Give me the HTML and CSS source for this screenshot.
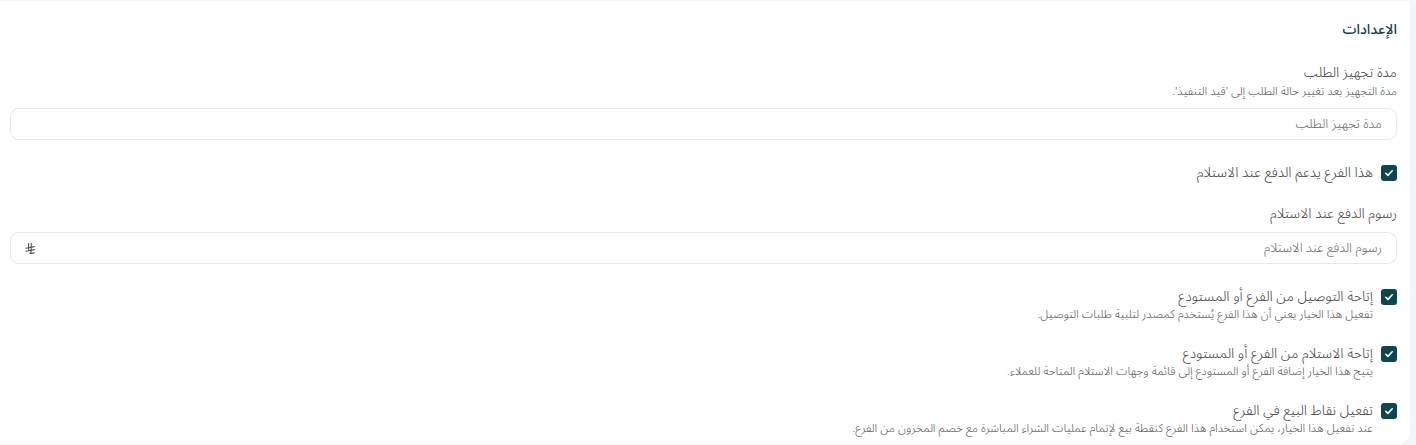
FILE: index.html
```html
<!DOCTYPE html>
<html lang="ar" dir="rtl">
<head>
<meta charset="utf-8">
<title>الإعدادات</title>
<link rel="stylesheet" href="styles.css">
</head>
<body>
<div class="card">
  <h2 class="title">الإعدادات</h2>

  <div class="field first">
    <div class="label">مدة تجهيز الطلب</div>
    <div class="help">مدة التجهيز بعد تغيير حالة الطلب إلى 'قيد التنفيذ'.</div>
    <div class="input"><span class="ph">مدة تجهيز الطلب</span></div>
  </div>

  <div class="check single">
    <span class="box"><svg viewBox="0 0 16 16" width="16" height="16"><path d="M4.8 8.3l2.1 2.1 4.3-4.6" fill="none" stroke="#fff" stroke-width="1.6" stroke-linecap="round" stroke-linejoin="round"/></svg></span>
    <div class="texts"><div class="label">هذا الفرع يدعم الدفع عند الاستلام</div></div>
  </div>

  <div class="field fee">
    <div class="label">رسوم الدفع عند الاستلام</div>
    <div class="input input-gap"><span class="ph">رسوم الدفع عند الاستلام</span>
      <svg class="riyal" viewBox="0 0 10 11" width="10" height="11"><path d="M3.6 0.6v7.2M6.2 0.2v7.8q0 1.4 -1.2 2.3M0.8 5.2l8.6-1.6M0.8 8.2l8.6-1.6M5.6 10.6l3.6-0.7" fill="none" stroke="#555" stroke-width="1.1" stroke-linecap="round"/></svg>
    </div>
  </div>

  <div class="check multi">
    <span class="box"><svg viewBox="0 0 16 16" width="16" height="16"><path d="M4.8 8.3l2.1 2.1 4.3-4.6" fill="none" stroke="#fff" stroke-width="1.6" stroke-linecap="round" stroke-linejoin="round"/></svg></span>
    <div class="texts">
      <div class="label">إتاحة التوصيل من الفرع أو المستودع</div>
      <div class="help desc">تفعيل هذا الخيار يعني أن هذا الفرع يُستخدم كمصدر لتلبية طلبات التوصيل.</div>
    </div>
  </div>

  <div class="check multi next">
    <span class="box"><svg viewBox="0 0 16 16" width="16" height="16"><path d="M4.8 8.3l2.1 2.1 4.3-4.6" fill="none" stroke="#fff" stroke-width="1.6" stroke-linecap="round" stroke-linejoin="round"/></svg></span>
    <div class="texts">
      <div class="label">إتاحة الاستلام من الفرع أو المستودع</div>
      <div class="help desc">يتيح هذا الخيار إضافة الفرع أو المستودع إلى قائمة وجهات الاستلام المتاحة للعملاء.</div>
    </div>
  </div>

  <div class="check multi next">
    <span class="box"><svg viewBox="0 0 16 16" width="16" height="16"><path d="M4.8 8.3l2.1 2.1 4.3-4.6" fill="none" stroke="#fff" stroke-width="1.6" stroke-linecap="round" stroke-linejoin="round"/></svg></span>
    <div class="texts">
      <div class="label">تفعيل نقاط البيع في الفرع</div>
      <div class="help desc">عند تفعيل هذا الخيار، يمكن استخدام هذا الفرع كنقطة بيع لإتمام عمليات الشراء المباشرة مع خصم المخزون من الفرع.</div>
    </div>
  </div>
</div>
</body>
</html>
```

FILE: styles.css
```css
* { box-sizing: border-box; }
html, body { margin: 0; padding: 0; }
body {
  background: #f4f5f7;
  font-family: "Noto Sans Arabic", "DejaVu Sans", "Noto Sans", sans-serif;
  color: #3b3b3b;
  overflow: hidden;
}
.card {
  margin: 1px 6px 0 0;
  width: 1410px;
  height: 443px;
  background: #ffffff;
  border-bottom-right-radius: 12px;
  padding: 19px 13px 0 10px;
}
.title {
  margin: 0;
  font-size: 14px;
  line-height: 20px;
  font-weight: 500;
  color: #0f3c4c;
}
.label {
  font-size: 14px;
  line-height: 20px;
  font-weight: 300;
  color: #3a3a3a;
}
.help {
  font-size: 11.7px;
  line-height: 18px;
  font-weight: 300;
  color: #505050;
}
.desc { margin-top: -1px; }
.field.first { margin-top: 23px; }
.input {
  margin-top: 7px;
  height: 32px;
  border: 1px solid #e7e7e7;
  border-radius: 9px;
  display: flex;
  align-items: center;
  justify-content: space-between;
  padding: 0 14px 0 14px;
}
.input-gap { margin-top: 8px; }
.ph {
  font-size: 13px;
  font-weight: 300;
  color: #666666;
}
.riyal { display: block; }
.check {
  display: flex;
  align-items: flex-start;
  gap: 8px;
}
.check.single { margin-top: 23px; }
.check.multi { margin-top: 23px; }
.check.next { margin-top: 20px; }
.fee { margin-top: 21px; }
.box {
  flex: none;
  width: 16px;
  height: 16px;
  margin-top: 2px;
  border-radius: 3px;
  background: #0d4651;
  display: block;
}
.box svg { display: block; }
.texts { display: flex; flex-direction: column; }
```
